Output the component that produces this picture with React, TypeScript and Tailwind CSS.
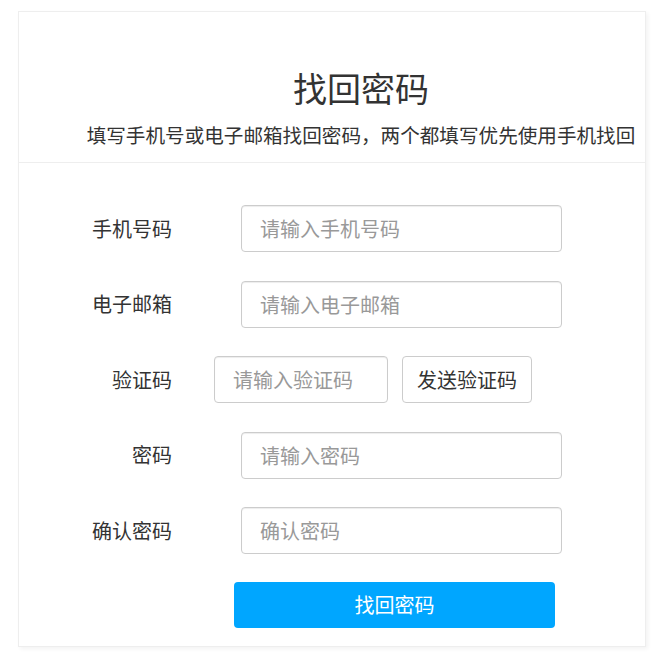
import React from 'react';

const font = { fontFamily: '"Noto Sans CJK SC", "Microsoft YaHei", sans-serif' };

interface FieldProps {
  label: string;
  placeholder: string;
  type?: string;
}

const Field: React.FC<FieldProps> = ({ label, placeholder, type = 'text' }) => (
  <div className="flex items-center h-[47px]">
    <label className="w-[153px] text-right text-[20px] leading-[28px] text-[#333]">{label}</label>
    <input
      type={type}
      placeholder={placeholder}
      className="ml-[69px] w-[321px] h-[47px] rounded-[4px] border border-[#ccc] bg-white px-[18px] text-[20px] text-[#333] outline-none placeholder:text-[#999] shadow-[inset_0_1px_1px_rgba(0,0,0,0.075)]"
    />
  </div>
);

export default function App() {
  return (
    <div className="min-h-[654px] bg-white pt-[11px] pl-[18px]" style={font}>
      <div className="w-[628px] border border-[#eee] bg-white shadow-[2px_2px_4px_rgba(0,0,0,0.05)]">
        {/* Header */}
        <div className="border-b border-[#eee] pt-[56px] pb-[13px] pl-[58px] text-center text-[#333]">
          <h1 className="text-[34px] leading-[40px] font-normal">找回密码</h1>
          <p className="mt-[13px] text-[19.6px] leading-[28px] whitespace-nowrap">
            填写手机号或电子邮箱找回密码，两个都填写优先使用手机找回
          </p>
        </div>

        {/* Form */}
        <form className="pt-[42px] pb-[18px] flex flex-col">
          <div className="flex flex-col gap-[28.5px]">
            <Field label="手机号码" placeholder="请输入手机号码" />
            <Field label="电子邮箱" placeholder="请输入电子邮箱" />
            <div className="flex items-center h-[47px]">
              <label className="w-[153px] text-right text-[20px] leading-[28px] text-[#333]">验证码</label>
              <input
                type="text"
                placeholder="请输入验证码"
                className="ml-[42px] w-[174px] h-[47px] rounded-[4px] border border-[#ccc] bg-white px-[18px] text-[20px] text-[#333] outline-none placeholder:text-[#999] shadow-[inset_0_1px_1px_rgba(0,0,0,0.075)]"
              />
              <button
                type="button"
                className="ml-[14px] w-[130px] h-[47px] rounded-[4px] border border-[#ccc] bg-white text-[20px] text-[#333]"
              >
                发送验证码
              </button>
            </div>
            <Field label="密码" placeholder="请输入密码" type="password" />
            <Field label="确认密码" placeholder="确认密码" type="password" />
          </div>
          <button
            type="button"
            className="mt-[28px] ml-[215px] w-[321px] h-[46px] rounded-[4px] bg-[#00a6ff] text-[20px] text-white"
          >
            找回密码
          </button>
        </form>
      </div>
    </div>
  );
}
